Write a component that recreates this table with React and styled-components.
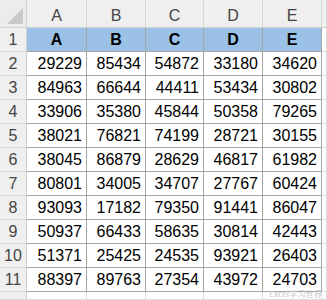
import React from 'react';
import styled, { createGlobalStyle } from 'styled-components';

const GlobalStyle = createGlobalStyle`
  html, body {
    margin: 0;
    padding: 0;
    background: #ffffff;
    overflow: hidden;
  }
`;

// data
const COLS = ['A', 'B', 'C', 'D', 'E'];
const COL_WIDTHS = [60, 59, 58, 59, 59];
const ROWS = [
  [29229, 85434, 54872, 33180, 34620],
  [84963, 66644, 44411, 53434, 30802],
  [33906, 35380, 45844, 50358, 79265],
  [38021, 76821, 74199, 28721, 30155],
  [38045, 86879, 28629, 46817, 61982],
  [80801, 34005, 34707, 27767, 60424],
  [93093, 17182, 79350, 91441, 86047],
  [50937, 66433, 58635, 30814, 42443],
  [51371, 25425, 24535, 93921, 26403],
  [88397, 89763, 27354, 43972, 24703],
];

const Sheet = styled.div`
  position: relative;
  width: 327px;
  height: 300px;
  display: grid;
  grid-template-columns: 27px ${COL_WIDTHS.map((w) => `${w}px`).join(' ')} 1fr;
  grid-template-rows: 28px repeat(11, 24px) 1fr;
  font-family: 'Liberation Sans', Arial, sans-serif;
  font-size: 16px;
  color: #000;
`;

const Corner = styled.div`
  background: #ececec;
  border-right: 1px solid #cfcfcf;
  border-bottom: 1px solid #cfcfcf;
  box-sizing: border-box;
  display: flex;
  align-items: flex-end;
  justify-content: flex-end;
  padding: 0 3px 3px 0;
`;

const ColHead = styled.div`
  background: #efefef;
  color: #444;
  box-sizing: border-box;
  border-right: 1px solid #d6d6d6;
  border-bottom: 1px solid #cfcfcf;
  display: flex;
  align-items: center;
  justify-content: center;
  padding-top: 4px;
`;

const RowHead = styled.div`
  background: #efefef;
  color: #444;
  box-sizing: border-box;
  border-right: 1px solid #cfcfcf;
  border-bottom: 1px solid #d6d6d6;
  display: flex;
  align-items: center;
  justify-content: center;
`;

const Cell = styled.div`
  box-sizing: border-box;
  border-right: 1px solid ${({ $light }) => ($light ? '#dadada' : '#a6a6a6')};
  border-bottom: 1px solid ${({ $light }) => ($light ? '#dadada' : '#a6a6a6')};
  background: ${({ $head }) => ($head ? '#9bc2e6' : '#ffffff')};
  font-weight: ${({ $head }) => ($head ? 700 : 400)};
  display: flex;
  align-items: center;
  justify-content: ${({ $head }) => ($head ? 'center' : 'flex-end')};
  padding-right: ${({ $head }) => ($head ? '0' : '4px')};
`;

const Watermark = styled.div`
  position: absolute;
  right: 5px;
  bottom: 1px;
  font-family: 'Noto Sans CJK SC', 'Liberation Sans', sans-serif;
  font-size: 8px;
  color: #c4c4c4;
  letter-spacing: 0.2px;
`;

function CornerMark() {
  return (
    <svg width="16" height="16" viewBox="0 0 16 16">
      <polygon points="16,0 16,16 0,16" fill="#c9c9c9" />
    </svg>
  );
}

export default function App() {
  return (
    <>
      <GlobalStyle />
      <Sheet>
        <Corner><CornerMark /></Corner>
        {COLS.map((c) => <ColHead key={c}>{c}</ColHead>)}
        <ColHead />

        <RowHead>1</RowHead>
        {COLS.map((c) => <Cell key={c} $head>{c}</Cell>)}
        <Cell $light />

        {ROWS.map((row, i) => (
          <React.Fragment key={i}>
            <RowHead>{i + 2}</RowHead>
            {row.map((v, j) => <Cell key={j}>{v}</Cell>)}
            <Cell $light />
          </React.Fragment>
        ))}

        <RowHead />
        {COLS.map((c) => <Cell key={c} $light />)}
        <Cell $light />

        <Watermark>Excel学习世界</Watermark>
      </Sheet>
    </>
  );
}
